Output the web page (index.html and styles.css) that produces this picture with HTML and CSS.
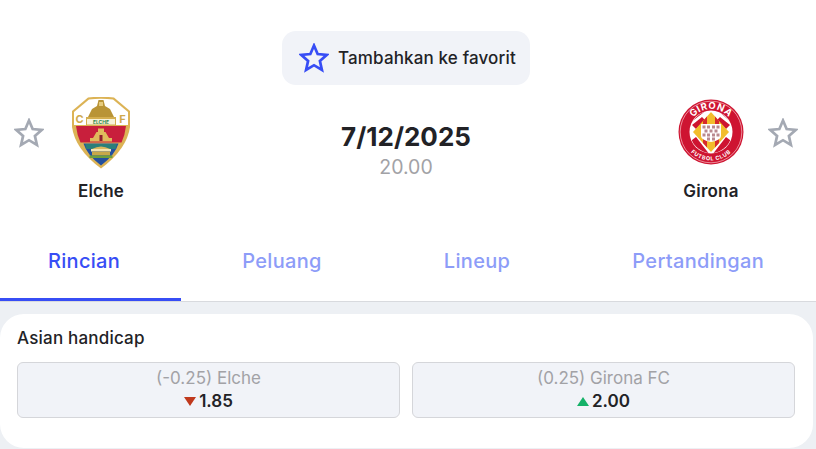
FILE: index.html
```html
<!DOCTYPE html>
<html lang="id">
<head>
<meta charset="utf-8">
<title>Elche vs Girona</title>
<link rel="stylesheet" href="styles.css">
</head>
<body>
<svg class="defs" width="0" height="0" aria-hidden="true">
  <symbol id="star" viewBox="0 0 30 30">
    <polygon points="15,2.5 18.64,10.98 27.84,11.83 20.9,17.92 22.93,26.92 15,22.2 7.07,26.92 9.1,17.92 2.16,11.83 11.36,10.98" fill="none" stroke="currentColor" stroke-width="2.7"/>
  </symbol>
</svg>
<header class="head">
  <div class="fav-row">
    <button class="fav"><svg class="fav-star"><use href="#star"/></svg><span>Tambahkan ke favorit</span></button>
  </div>
  <div class="match">
    <svg class="team-star"><use href="#star"/></svg>
    <div class="team">
      <svg class="crest" viewBox="0 0 66 72">
        <g transform="translate(4 0)">
          <path d="M16 0.5 Q29 -1 42 0.5 L58 14 V30 Q55 52 29 71.5 Q3 52 0 30 V14Z" fill="#dcb355"/>
          <path d="M17 2.5 Q29 1 41 2.5 L56 15 V28 H2 V15Z" fill="#fff"/>
          <path d="M4 29 H54 Q53 38 49.500 45.500 H8.500 Q5 38 4 29Z" fill="#c81f3c"/>
          <path d="M11.500 46.500 H46.500 Q43 58 29 68.500 Q15 58 11.500 46.500Z" fill="#23509f"/>
          <path d="M13 47 H45 L43.500 52 H14.500Z" fill="#2a7f7a"/>
          <path d="M25 9 L26.500 3 H31.500 L33 9 L38 12 L42 20 H16 L20 12Z" fill="#b99436"/>
          <path d="M27 5 H31 V9 H27Z" fill="#e6cb7c"/>
          <rect x="14" y="20" width="30" height="8.500" fill="#d4ae4f"/>
          <rect x="15" y="22" width="28" height="5.500" fill="#f7f2d8"/>
          <text x="29" y="26.800" class="elche-word" text-anchor="middle">ELCHE</text>
          <text x="7.500" y="26" class="elche-letter" text-anchor="middle">C</text>
          <text x="50.500" y="26" class="elche-letter" text-anchor="middle">F</text>
          <path d="M18 44.500 V41 H21 L24.500 35 H26 V31.500 H32 V35 H33.500 L37 41 H40 V44.500Z" fill="#e0bb5c"/>
          <rect x="27.500" y="38" width="3" height="6" fill="#8f2030"/>
          <path d="M20 52 Q29 47 38 52Z" fill="#d9b85e"/>
          <rect x="19" y="52" width="20" height="2.500" fill="#f4e5ae"/>
          <rect x="20" y="54.500" width="18" height="4" fill="#c8a849"/>
          <rect x="17.500" y="58.500" width="23" height="2.500" fill="#6d9f3c"/>
        </g>
      </svg>
      <span class="team-name">Elche</span>
    </div>
    <div class="when">
      <div class="date">7/12/2025</div>
      <div class="time">20.00</div>
    </div>
    <div class="team">
      <svg class="crest" viewBox="0 0 66 72">
        <defs>
          <path id="arc-top" d="M10 35 A23 23 0 0 1 56 35"/>
          <path id="arc-bot" d="M4.500 35 A28.500 28.500 0 0 0 61.500 35"/>
          <clipPath id="inner"><circle cx="33" cy="35" r="21"/></clipPath>
        </defs>
        <circle cx="33" cy="35" r="32.500" fill="#ce1431"/>
        <circle cx="33" cy="35" r="30.800" fill="none" stroke="#f3a9b3" stroke-width=".8"/>
        <circle cx="33" cy="35" r="21.500" fill="#fff"/>
        <g clip-path="url(#inner)">
          <path d="M8 18 L24 8 L30 12 L12 26Z M44 8 L60 20 L54 26 L38 12Z M10 46 L18 40 L32 58 L24 62Z M56 46 L48 40 L34 58 L42 62Z" fill="#ce1431"/>
          <path d="M14 28 L24 20 L27 23 L18 32Z M52 28 L42 20 L39 23 L48 32Z" fill="#ce1431"/>
        </g>
        <path d="M33 15 L51 35 L33 55 L15 35Z" fill="#f2bd2c"/>
        <path d="M25 24 V46 L29 50.500 V19.500Z M37 19.500 V50.500 L41 46 V24Z" fill="#d72b2b"/>
        <path d="M23 27 H43 V39 Q43 43 33 45 Q23 43 23 39Z" fill="#fff"/>
        <g fill="#b98a8f">
          <rect x="24.500" y="28.500" width="3" height="3"/><rect x="29" y="28.500" width="3" height="3"/><rect x="34" y="28.500" width="3" height="3"/><rect x="38.500" y="28.500" width="3" height="3"/>
          <rect x="26.500" y="32.500" width="3" height="3"/><rect x="31.500" y="32.500" width="3" height="3"/><rect x="36.500" y="32.500" width="3" height="3"/>
          <rect x="24.500" y="36.500" width="3" height="3"/><rect x="29" y="36.500" width="3" height="3"/><rect x="34" y="36.500" width="3" height="3"/><rect x="38.500" y="36.500" width="3" height="3"/>
          <rect x="29" y="40.500" width="3" height="3"/><rect x="34" y="40.500" width="3" height="3"/>
        </g>
        <text class="gir-word" text-anchor="middle"><textPath href="#arc-top" startOffset="50%">GIRONA</textPath></text>
        <text class="gir-club" text-anchor="middle"><textPath href="#arc-bot" startOffset="50%">FUTBOL CLUB</textPath></text>
      </svg>
      <span class="team-name">Girona</span>
    </div>
    <svg class="team-star"><use href="#star"/></svg>
  </div>
  <nav class="tabs">
    <a class="tab active">Rincian</a>
    <a class="tab">Peluang</a>
    <a class="tab">Lineup</a>
    <a class="tab">Pertandingan</a>
    <span class="indicator"></span>
  </nav>
</header>
<main class="content">
  <section class="card">
    <h2 class="card-title">Asian handicap</h2>
    <div class="odds">
      <div class="odd">
        <span class="odd-label">(-0.25) Elche</span>
        <span class="odd-value"><i class="tri down"></i>1.85</span>
      </div>
      <div class="odd">
        <span class="odd-label">(0.25) Girona FC</span>
        <span class="odd-value"><i class="tri up"></i>2.00</span>
      </div>
    </div>
  </section>
</main>
</body>
</html>
```
FILE: styles.css
```css
* { box-sizing: border-box; }
html, body { margin: 0; height: 100%; }
body {
  background: #edf0f4;
  font-family: Inter, "Liberation Sans", sans-serif;
  color: #222226;
  overflow: hidden;
}
.defs { position: absolute; }
.head { background: #fff; border-bottom: 1px solid #d8dade; height: 302px; padding-top: 31px; }
.fav-row { display: flex; justify-content: center; padding-right: 4px; }
.fav {
  display: flex; align-items: center; gap: 9px;
  height: 54px; width: 248px; padding: 0 0 0 17px;
  border: 0; border-radius: 14px; background: #f1f3f8;
  font: 500 17px Inter, sans-serif; letter-spacing: .15px; color: #222226;
}
.fav-star { width: 30px; height: 30px; color: #374df5; flex: none; }
.match { display: flex; align-items: flex-start; padding: 12px 18px 0 14px; }
.team-star { width: 30px; height: 30px; margin-top: 21px; color: #a4a9b3; flex: none; }
.team { width: 66px; margin: 0 24px; display: flex; flex-direction: column; align-items: center; flex: none; }
.crest { width: 66px; height: 72px; display: block; }
.team-name { font-size: 17px; font-weight: 600; letter-spacing: .2px; line-height: 20px; margin-top: 12px; color: #222226; }
.when { flex: 1; text-align: center; padding-top: 24px; }
.date { font-size: 26px; font-weight: 700; line-height: 32px; }
.time { font-size: 19.5px; line-height: 26px; color: #a2a2a6; margin-top: 1px; }
.tabs {
  position: relative; display: flex; justify-content: space-between;
  padding: 0 52px 0 48px; margin-top: 46px;
}
.tab { font-size: 20px; font-weight: 500; letter-spacing: .3px; line-height: 28px; color: #8d9cf8; }
.tab.active { color: #374df5; }
.indicator { position: absolute; left: 0; top: 51px; width: 181px; height: 3px; background: #374df5; }
.content { padding: 12px 3px 0 0; }
.card { background: #fff; border-radius: 24px; height: 134px; padding: 13px 18px 0 17px; }
.card-title { margin: 0; font-size: 17px; font-weight: 500; letter-spacing: .2px; line-height: 22px; color: #222226; }
.odds { display: flex; gap: 12px; margin-top: 13px; }
.odd {
  flex: 1; height: 56px; padding-bottom: 2px; display: flex; flex-direction: column; align-items: center; justify-content: center;
  background: #f1f3f8; border: 1px solid #d5d6da; border-radius: 6px;
}
.odd-label { font-size: 17px; line-height: 24px; color: #a2a2a6; }
.odd-value { display: flex; align-items: center; gap: 3px; font-size: 17px; font-weight: 600; line-height: 22px; color: #222226; }
.tri { width: 0; height: 0; border-left: 6px solid transparent; border-right: 6px solid transparent; }
.tri.down { border-top: 9px solid #c0391d; }
.tri.up { border-bottom: 9px solid #15b168; }
.elche-word { font: 700 5px Inter, sans-serif; fill: #2e8a4a; }
.elche-letter { font: 700 11px Inter, sans-serif; fill: #cfa94c; }
.gir-word { font: 700 9.5px Inter, sans-serif; fill: #fff; letter-spacing: .5px; }
.gir-club { font: 700 5.5px Inter, sans-serif; fill: #fff; letter-spacing: .6px; }
```
